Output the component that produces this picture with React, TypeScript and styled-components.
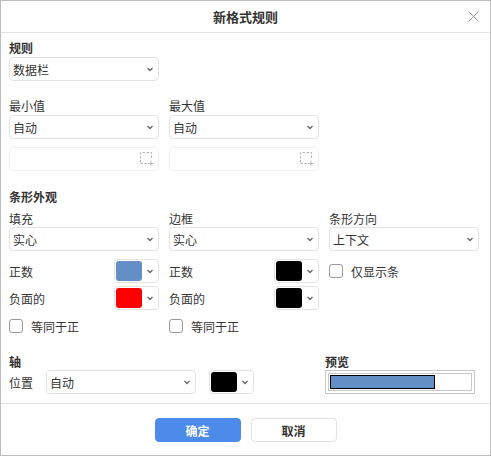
import React from "react";
import styled, { createGlobalStyle } from "styled-components";

const Global = createGlobalStyle`
  html, body { margin: 0; padding: 0; background: #fff; }
  body { font-family: "Noto Sans CJK SC", "Liberation Sans", sans-serif; font-size: 12px; color: #333; }
`;

const Dialog = styled.div`
  box-sizing: border-box;
  width: 491px;
  height: 456px;
  border: 1px solid #bdbdbd;
  display: flex;
  flex-direction: column;
  background: #fff;
`;

const Header = styled.header`
  flex: none;
  height: 32px;
  box-sizing: border-box;
  border-bottom: 1px solid #e3e3e3;
  display: flex;
  align-items: center;
  justify-content: center;
  position: relative;
`;

const Title = styled.h1`
  margin: 0;
  font-size: 13px;
  font-weight: 700;
  color: #333;
  line-height: 31px;
`;

const CloseButton = styled.button`
  position: absolute;
  right: 11px;
  top: 10px;
  width: 11px;
  height: 11px;
  padding: 0;
  border: 0;
  background: none;
  display: flex;
`;

const Body = styled.div`
  flex: 1;
  padding: 0 8px;
  display: flex;
  flex-direction: column;
`;

const Block = styled.section<{ $top: number }>`
  margin-top: ${(p) => p.$top}px;
`;

const SectionLabel = styled.div`
  font-size: 12px;
  font-weight: 700;
  line-height: 16px;
  height: 16px;
  color: #333;
`;

const FieldLabel = styled.div<{ $height?: number }>`
  font-size: 12px;
  line-height: 16px;
  height: ${(p) => p.$height ?? 16}px;
  color: #333;
`;

const Columns = styled.div<{ $top?: number }>`
  display: grid;
  grid-template-columns: 150px 150px 150px;
  column-gap: 10px;
  align-items: start;
  margin-top: ${(p) => p.$top ?? 0}px;
`;

const Stack = styled.div`
  display: flex;
  flex-direction: column;
`;

const SelectBox = styled.div<{ $width?: number }>`
  box-sizing: border-box;
  width: ${(p) => p.$width ?? 150}px;
  height: 24px;
  border: 1px solid #e3e3e3;
  border-radius: 4px;
  background: #fff;
  display: flex;
  align-items: center;
  justify-content: space-between;
  padding: 0 5px 0 3px;
  font-size: 12px;
  color: #333;
  flex: none;
`;

const SelectGap = styled.div`
  margin-top: 1px;
`;

const RangeInput = styled.div`
  box-sizing: border-box;
  width: 150px;
  height: 24px;
  margin-top: 8px;
  border: 1px solid #f0f0f0;
  border-radius: 4px;
  display: flex;
  align-items: center;
  justify-content: flex-end;
  padding-right: 4px;
`;

const ColorRow = styled.div<{ $top: number }>`
  margin-top: ${(p) => p.$top}px;
  height: 24px;
  display: flex;
  align-items: center;
  justify-content: space-between;
`;

const ColorButton = styled.div`
  box-sizing: border-box;
  width: 45px;
  height: 24px;
  border: 1px solid #e3e3e3;
  border-radius: 4px;
  padding: 1px 5px 1px 1px;
  display: flex;
  align-items: center;
  justify-content: space-between;
  flex: none;
  background: #fff;
`;

const Swatch = styled.div<{ $color: string }>`
  width: 26px;
  height: 20px;
  border-radius: 3px;
  background: ${(p) => p.$color};
`;

const CheckRow = styled.label<{ $top: number }>`
  margin-top: ${(p) => p.$top}px;
  display: flex;
  align-items: center;
  gap: 8px;
  height: 14px;
  font-size: 12px;
  color: #333;
`;

const CheckSquare = styled.span`
  box-sizing: border-box;
  width: 14px;
  height: 14px;
  border: 1px solid #999;
  border-radius: 3px;
  background: #fff;
  flex: none;
`;

const AxisRow = styled.div`
  display: flex;
  align-items: flex-start;
`;

const AxisLeft = styled.div`
  width: 316px;
  flex: none;
`;

const AxisControls = styled.div`
  display: flex;
  align-items: center;
`;

const PositionLabel = styled.span`
  width: 37px;
  flex: none;
  font-size: 12px;
  color: #333;
`;

const AxisColor = styled.div`
  margin-left: 13px;
`;

const Preview = styled.div`
  box-sizing: border-box;
  width: 150px;
  height: 24px;
  border: 1px solid #c8c8c8;
  padding: 2px;
`;

const PreviewInner = styled.div`
  box-sizing: border-box;
  height: 100%;
  border: 1px solid #c8c8c8;
  padding: 1px;
`;

const PreviewBar = styled.div`
  box-sizing: border-box;
  height: 100%;
  border: 1px solid #000;
  background: #638ec6;
`;

const Footer = styled.footer`
  flex: none;
  height: 52px;
  box-sizing: border-box;
  border-top: 1px solid #e3e3e3;
  display: flex;
  justify-content: center;
  gap: 10px;
  padding-top: 14px;
`;

const Button = styled.button<{ $primary?: boolean }>`
  box-sizing: border-box;
  width: 86px;
  height: 24px;
  border-radius: 4px;
  border: 1px solid ${(p) => (p.$primary ? "#4d8beb" : "#e3e3e3")};
  background: ${(p) => (p.$primary ? "#4d8beb" : "#fff")};
  color: ${(p) => (p.$primary ? "#fff" : "#333")};
  font-family: inherit;
  font-size: 12px;
  font-weight: 700;
  padding: 0;
`;

const Chevron = () => (
  <svg width="6" height="5" viewBox="0 0 6 5" fill="none">
    <path d="M0.5 1 L3 3.5 L5.5 1" stroke="#666" strokeWidth="1.3" />
  </svg>
);

const RangeIcon = () => (
  <svg width="14" height="14" viewBox="0 0 14 14" fill="none" stroke="#b5b5b5" strokeWidth="1">
    <path d="M0.5 10.5 V0.5 H11.5 V7" strokeDasharray="2.5 1.5" />
    <path d="M0.5 11.5 H7" strokeDasharray="2.5 1.5" />
    <path d="M8 11.5 H13.5 M11 8.5 V14" />
  </svg>
);

const Select = ({ value, width }: { value: string; width?: number }) => (
  <SelectBox $width={width}>
    <span>{value}</span>
    <Chevron />
  </SelectBox>
);

const Color = ({ color }: { color: string }) => (
  <ColorButton>
    <Swatch $color={color} />
    <Chevron />
  </ColorButton>
);

export default function App() {
  return (
    <>
      <Global />
      <Dialog>
        <Header>
          <Title>新格式规则</Title>
          <CloseButton aria-label="关闭">
            <svg width="11" height="11" viewBox="0 0 11 11" fill="none" stroke="#999" strokeWidth="1">
              <path d="M0.5 0.5 L10.5 10.5 M10.5 0.5 L0.5 10.5" />
            </svg>
          </CloseButton>
        </Header>
        <Body>
          <Block $top={7}>
            <SectionLabel>规则</SectionLabel>
            <SelectGap>
              <Select value="数据栏" />
            </SelectGap>
          </Block>
          <Block $top={17}>
            <Columns>
              <Stack>
                <FieldLabel>最小值</FieldLabel>
                <SelectGap>
                  <Select value="自动" />
                </SelectGap>
                <RangeInput>
                  <RangeIcon />
                </RangeInput>
              </Stack>
              <Stack>
                <FieldLabel>最大值</FieldLabel>
                <SelectGap>
                  <Select value="自动" />
                </SelectGap>
                <RangeInput>
                  <RangeIcon />
                </RangeInput>
              </Stack>
            </Columns>
          </Block>
          <Block $top={18}>
            <SectionLabel>条形外观</SectionLabel>
            <Columns $top={6}>
              <Stack>
                <FieldLabel $height={15}>填充</FieldLabel>
                <SelectGap>
                  <Select value="实心" />
                </SelectGap>
                <ColorRow $top={8}>
                  <span>正数</span>
                  <Color color="#638ec6" />
                </ColorRow>
                <ColorRow $top={3}>
                  <span>负面的</span>
                  <Color color="#ff0000" />
                </ColorRow>
                <CheckRow $top={9}>
                  <CheckSquare />
                  等同于正
                </CheckRow>
              </Stack>
              <Stack>
                <FieldLabel $height={15}>边框</FieldLabel>
                <SelectGap>
                  <Select value="实心" />
                </SelectGap>
                <ColorRow $top={8}>
                  <span>正数</span>
                  <Color color="#000000" />
                </ColorRow>
                <ColorRow $top={3}>
                  <span>负面的</span>
                  <Color color="#000000" />
                </ColorRow>
                <CheckRow $top={9}>
                  <CheckSquare />
                  等同于正
                </CheckRow>
              </Stack>
              <Stack>
                <FieldLabel $height={15}>条形方向</FieldLabel>
                <SelectGap>
                  <Select value="上下文" />
                </SelectGap>
                <CheckRow $top={13}>
                  <CheckSquare />
                  仅显示条
                </CheckRow>
              </Stack>
            </Columns>
          </Block>
          <Block $top={21}>
            <AxisRow>
              <AxisLeft>
                <SectionLabel>轴</SectionLabel>
                <AxisControls>
                  <PositionLabel>位置</PositionLabel>
                  <Select value="自动" />
                  <AxisColor>
                    <Color color="#000000" />
                  </AxisColor>
                </AxisControls>
              </AxisLeft>
              <div>
                <SectionLabel>预览</SectionLabel>
                <Preview>
                  <PreviewInner>
                    <PreviewBar style={{ width: "75%" }} />
                  </PreviewInner>
                </Preview>
              </div>
            </AxisRow>
          </Block>
        </Body>
        <Footer>
          <Button $primary>确定</Button>
          <Button>取消</Button>
        </Footer>
      </Dialog>
    </>
  );
}
